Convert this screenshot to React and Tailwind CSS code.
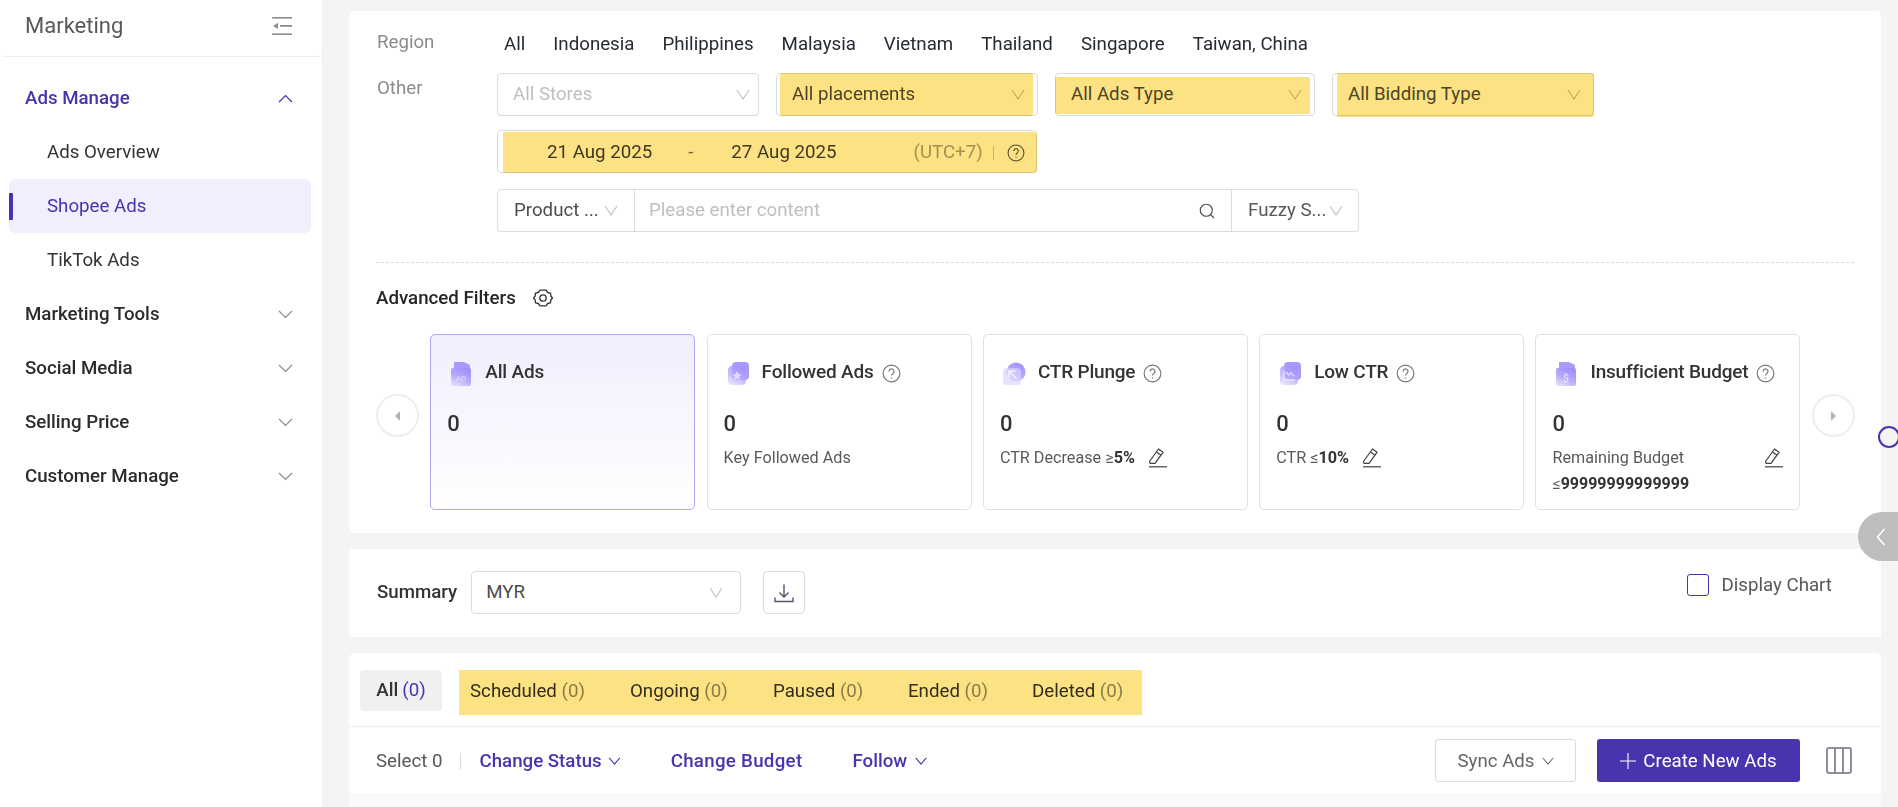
import React from "react";
import { Search } from "lucide-react";

// thin chevron used by every select
const Chevron = ({ up, className = "w-[14px] h-[11px] text-[#bfbfbf]" }) => (
  <svg viewBox="0 0 14 11" fill="none" stroke="currentColor" strokeWidth="1.1" className={className}>
    <polyline points={up ? "1,9 7,2 13,9" : "1,1 7,10 13,1"} />
  </svg>
);

const SmallChevron = ({ className }) => (
  <svg viewBox="0 0 14 9" fill="none" stroke="currentColor" strokeWidth="1.2" className={className}>
    <polyline points="1,1 7,8 13,1" />
  </svg>
);

const Help = ({ className = "w-[19px] h-[19px] text-[#737373]" }) => (
  <svg viewBox="0 0 20 20" fill="none" stroke="currentColor" strokeWidth="1.2" className={className}>
    <circle cx="10" cy="10" r="8.8" />
    <path d="M7.4 7.8a2.6 2.6 0 1 1 4 2.2c-.9.6-1.4 1.1-1.4 2.2" />
    <circle cx="10" cy="14.7" r=".7" fill="currentColor" stroke="none" />
  </svg>
);

const Edit = () => (
  <svg viewBox="0 0 20 20" fill="none" stroke="#404040" strokeWidth="1.2" className="w-[20px] h-[20px]">
    <path d="M1.500 13.500 10.500 1l4.500 3.300-8 11H2z" strokeLinejoin="round" />
    <path d="M8.500 4l4.500 3.300" />
    <path d="M1 18.800h18" />
  </svg>
);

// pastel gradient card icons: a saturated shape behind, a pale blurred one in front
const CardIcon = ({ id, back, children }) => (
  <svg viewBox="0 0 24 26" className="w-[24px] h-[26px] shrink-0">
    <defs>
      <linearGradient id={id} x1="0.7" y1="0" x2="0.2" y2="1">
        <stop offset="0" stopColor="#a08ffb" />
        <stop offset="0.55" stopColor="#b8abfc" />
        <stop offset="1" stopColor="#e4dffe" />
      </linearGradient>
      <filter id={id + "b"} x="-20%" y="-20%" width="140%" height="140%">
        <feGaussianBlur stdDeviation="0.7" />
      </filter>
    </defs>
    <g filter={`url(#${id}b)`} fill={`url(#${id})`}>
      {back === "circle" && (
        <>
          <circle cx="14" cy="11" r="9.500" />
          <rect x="1" y="7" width="18" height="17" rx="4" fill="#d9d3fe" fillOpacity="0.65" />
        </>
      )}
      {back === "folder" && (
        <>
          <path d="M5 1h10l6 3v14H5z" fill="#a99bfb" />
          <rect x="2" y="7" width="20" height="18" rx="2" />
        </>
      )}
      {back === "card" && (
        <>
          <rect x="6" y="1" width="17" height="18" rx="4" fill="#a99bfb" />
          <rect x="2" y="5" width="18" height="19" rx="4" fillOpacity="0.8" />
        </>
      )}
    </g>
    {children}
  </svg>
);

const Select = ({ label, className, muted, overlay }) => (
  <div className={`relative h-[43px] flex items-center justify-between pl-[15px] pr-[8px] bg-white border border-[#dcdcdc] rounded-[4px] ${className}`}>
    <span className={muted ? "text-[#bfbfbf]" : "text-[#4d4d4d]"}>{label}</span>
    <Chevron />
    {overlay && <span className={`absolute bg-[#fde283] mix-blend-multiply rounded-[2px] ${overlay}`} />}
  </div>
);

const Sub = ({ label, active }) => (
  <div className={`relative h-[54px] ml-[9px] mr-[11px] pl-[38px] flex items-center rounded-[6px] ${active ? "bg-[#f1effd] text-[#4a33ae]" : "text-[#333333]"}`}>
    {active && <span className="absolute left-0 top-[14px] w-[4px] h-[27px] bg-[#4a33ae] rounded-r-[1px]" />}
    {label}
  </div>
);

const MenuChevron = ({ open }) => (
  <svg viewBox="0 0 15 9" fill="none" stroke="currentColor" strokeWidth="1.2" className={`w-[15px] h-[9px] ${open ? "text-[#4a33ae]" : "text-[#8c8c8c]"}`}>
    <polyline points={open ? "1,8 7.500,1.500 14,8" : "1,1 7.500,7.500 14,1"} />
  </svg>
);

const Menu = ({ label, open }) => (
  <div className={`h-[54px] pl-[25px] pr-[29px] flex items-center justify-between font-medium ${open ? "text-[#4a33ae]" : "text-[#2b2b2b]"}`}>
    {label}
    <MenuChevron open={open} />
  </div>
);

const FilterCard = ({ title, help, icon, active, children }) => (
  <div className={`w-[265px] h-[176px] shrink-0 border rounded-[5px] pt-[26px] pl-[16px] pr-[15px] ${active ? "border-[#b3a6fa] bg-gradient-to-b from-[#f1eefd] to-white" : "border-[#e1e1e1] bg-white"}`}>
    <div className="h-[25px] flex items-center pl-[2px]">
      {icon}
      <span className="ml-[12px] pb-[2px] font-medium text-[#333333] text-[19px] tracking-[-0.2px]">{title}</span>
      {help && <Help className="ml-[8px] w-[19px] h-[19px] text-[#737373]" />}
    </div>
    <div className="mt-[24px] h-[26px] flex items-center text-[22px] font-medium text-[#333333]">0</div>
    {children}
  </div>
);

const Arrow = ({ right }) => (
  <div className="self-start mt-[60px] w-[43px] h-[43px] shrink-0 rounded-full border-2 border-[#eeeeee] bg-white flex items-center justify-center">
    <span className={`w-0 h-0 border-y-[5px] border-y-transparent ${right ? "border-l-[5px] border-l-[#b5b5b5]" : "border-r-[5px] border-r-[#b5b5b5]"}`} />
  </div>
);

const Tab = ({ label, className }) => (
  <span className={`text-[#333333] ${className}`}>
    {label} <span className="text-[#8c8c8c]">(0)</span>
  </span>
);

const regions = ["All", "Indonesia", "Philippines", "Malaysia", "Vietnam", "Thailand", "Singapore", "Taiwan, China"];

export default function App() {
  return (
    <div className="relative flex h-[807px] w-full overflow-hidden bg-[#f4f4f4] text-[18.7px] font-['Roboto',sans-serif]">
      {/* Sidebar */}
      <aside className="w-[322px] shrink-0 bg-white">
        <div className="h-[57px] pl-[25px] pr-[30px] flex items-center justify-between border-b border-[#eeeeee] rounded-b-[4px]">
          <span className="pb-[5px] text-[22px] text-[#595959]">Marketing</span>
          <svg viewBox="0 0 20 18" className="mb-[5px] w-[20px] h-[18px]" fill="#8c8c8c">
            <rect x="0" y="0" width="20" height="1.6" />
            <rect x="0" y="16.4" width="20" height="1.6" />
            <rect x="8" y="8" width="12" height="1.8" />
            <path d="M1 8.9 6 5.8v6.2z" />
          </svg>
        </div>
        <nav className="pt-[14px]">
          <Menu label="Ads Manage" open />
          <Sub label="Ads Overview" />
          <Sub label="Shopee Ads" active />
          <Sub label="TikTok Ads" />
          <Menu label="Marketing Tools" />
          <Menu label="Social Media" />
          <Menu label="Selling Price" />
          <Menu label="Customer Manage" />
        </nav>
      </aside>

      {/* Main */}
      <main className="flex-1 pl-[27px] pr-[17px] pt-[11px] flex flex-col gap-[16px]">
        {/* Filters */}
        <section className="bg-white rounded-[5px] pt-[19px] pb-[23px]">
          <div className="flex pl-[28px]">
            <div className="w-[120px] shrink-0 text-[#8c8c8c] -mt-[2px]">
              <div className="h-[20px]">Region</div>
              <div className="mt-[26px]">Other</div>
            </div>
            <div>
              <div className="h-[26px] pl-[7px] pt-[3px] flex items-center gap-[28px] text-[#262b33]">
                {regions.map((r) => (
                  <span key={r}>{r}</span>
                ))}
              </div>
              <div className="mt-[17px] flex gap-[17px]">
                <Select label="All Stores" muted className="w-[262px]" />
                <Select label="All placements" className="w-[262px] pr-[12px]" overlay="left-[3px] right-[4px] -top-px -bottom-px" />
                <Select label="All Ads Type" className="w-[260px] pr-[12px]" overlay="-left-px right-[4px] top-[3px] bottom-[1px]" />
                <Select label="All Bidding Type" className="w-[262px] pr-[12px]" overlay="left-[4px] -right-[1px] -top-px -bottom-[2px]" />
              </div>
              <div className="relative mt-[14px] w-[540px] h-[43px] pt-[2px] flex items-center border border-[#dcdcdc] rounded-[4px] text-[#404040]">
                <span className="ml-[49px]">21 Aug 2025</span>
                <span className="ml-[36px] text-[#737373]">-</span>
                <span className="ml-[38px]">27 Aug 2025</span>
                <span className="ml-[77px] text-[#a3a3a3]">(UTC+7)</span>
                <span className="ml-[10px] w-px h-[14px] bg-[#c9c9c9]" />
                <Help className="ml-[13px] w-[18px] h-[18px] text-[#595959]" />
                <span className="absolute left-[5px] -right-px top-[1px] -bottom-px bg-[#fde283] mix-blend-multiply rounded-r-[4px]" />
              </div>
              <div className="mt-[16px] w-[862px] h-[43px] flex items-center border border-[#dcdcdc] rounded-[4px]">
                <div className="w-[137px] h-full pl-[16px] pr-[16px] flex items-center justify-between border-r border-[#dcdcdc] text-[#4d4d4d]">
                  Product ...
                  <Chevron />
                </div>
                <span className="flex-1 pl-[14px] text-[#bfbfbf]">Please enter content</span>
                <Search className="w-[18px] h-[18px] mr-[15px] text-[#4d4d4d]" strokeWidth={1.5} />
                <div className="w-[127px] h-full pl-[16px] pr-[15px] flex items-center justify-between border-l border-[#dcdcdc] text-[#595959]">
                  Fuzzy S...
                  <Chevron />
                </div>
              </div>
            </div>
          </div>

          <div className="mt-[30px] mx-[27px] border-t border-dashed border-[#dcdcdc]" />

          <div className="mt-[23px] ml-[27px] h-[24px] flex items-center font-medium text-[#262626]">
            Advanced Filters
            <svg viewBox="0 0 20 20" fill="none" stroke="#333333" strokeWidth="1.3" className="ml-[17px] w-[20px] h-[20px]">
              <path d="M7 2.2h6l1.7 2.3 2.8.7.4 3L19.500 10l-1.600 1.800-.4 3-2.800.7L13 17.800H7l-1.700-2.300-2.800-.7-.4-3L.5 10l1.600-1.800.4-3 2.800-.7z" strokeLinejoin="round" />
              <circle cx="10" cy="10" r="3.200" />
            </svg>
          </div>

          <div className="mt-[24px] ml-[27px] flex gap-[11.3px]">
            <Arrow />
            <FilterCard
              active
              title="All Ads"
              icon={
                <CardIcon id="ad" back="folder">
                  <text x="12" y="20" textAnchor="middle" fontSize="8" fill="#ffffff" fillOpacity="0.65">AD</text>
                </CardIcon>
              }
            />
            <FilterCard
              help
              title="Followed Ads"
              icon={
                <CardIcon id="fw" back="card">
                  <path d="M11 10l1.400 3 3.200.4-2.300 2.200.6 3.200L11 17.200l-2.900 1.600.6-3.200-2.300-2.200 3.200-.4z" fill="#ffffff" fillOpacity="0.6" />
                </CardIcon>
              }
            >
              <div className="mt-[11px] h-[22px] flex items-center text-[16.2px] text-[#595959]">Key Followed Ads</div>
            </FilterCard>
            <FilterCard
              help
              title="CTR Plunge"
              icon={
                <CardIcon id="ct" back="circle">
                  <path d="M7 16.500V10h6.500M7 10l7.500 7.500" stroke="#ffffff" strokeOpacity="0.8" strokeWidth="1.500" fill="none" />
                </CardIcon>
              }
            >
              <div className="mt-[11px] h-[22px] flex items-center text-[16.2px] text-[#595959]">
                CTR Decrease ≥<b className="font-bold text-[#333333]">5%</b>
                <span className="ml-[13px]"><Edit /></span>
              </div>
            </FilterCard>
            <FilterCard
              help
              title="Low CTR"
              icon={
                <CardIcon id="lc" back="card">
                  <path d="M6 10v9h11M8 11l3 3 2-2 3 3" stroke="#ffffff" strokeOpacity="0.65" strokeWidth="1.300" fill="none" />
                </CardIcon>
              }
            >
              <div className="mt-[11px] h-[22px] flex items-center text-[16.2px] text-[#595959]">
                CTR ≤<b className="font-bold text-[#333333]">10%</b>
                <span className="ml-[13px]"><Edit /></span>
              </div>
            </FilterCard>
            <FilterCard
              help
              title="Insufficient Budget"
              icon={
                <CardIcon id="ib" back="folder">
                  <text x="12" y="21" textAnchor="middle" fontSize="10" fill="#ffffff" fillOpacity="0.75">$</text>
                </CardIcon>
              }
            >
              <div className="mt-[11px] h-[22px] flex items-center justify-between text-[16.2px] text-[#595959]">
                Remaining Budget
                <Edit />
              </div>
              <div className="mt-[4px] h-[22px] flex items-center text-[16px] text-[#595959]">
                ≤<b className="font-bold text-[#333333]">99999999999999</b>
              </div>
            </FilterCard>
            <Arrow right />
          </div>
        </section>

        {/* Summary */}
        <section className="h-[88px] bg-white pl-[28px] pr-[49px] pt-[22px] flex items-start">
          <span className="h-[43px] flex items-center font-medium text-[#333333]">Summary</span>
          <Select label="MYR" className="ml-[14px] w-[270px] pr-[17px] !pl-[14px]" />
          <button className="ml-[22px] w-[42px] h-[43px] border border-[#dcdcdc] rounded-[4px] flex items-center justify-center">
            <svg viewBox="0 0 20 20" fill="none" stroke="#4d5566" strokeWidth="1.400" className="w-[20px] h-[20px]">
              <path d="M10 1.500v12M5.500 9.500l4.500 4.500 4.500-4.500M1 14.500v4h18v-4" />
            </svg>
          </button>
          <label className="ml-auto flex items-center gap-[12px] text-[#595959]">
            <span className="w-[22px] h-[22px] border border-[#4a33ae] rounded-[3px]" />
            Display Chart
          </label>
        </section>

        {/* Table header */}
        <section className="flex-1 bg-[#f9f9f9] rounded-t-[6px]">
          <div className="bg-white rounded-t-[6px]">
            <div className="h-[74px] pl-[11px] pt-[17px] flex items-start border-b border-[#ededed]">
              <span className="w-[82px] h-[41px] flex items-center justify-center gap-[4px] bg-[#f0f0f0] rounded-[4px] font-medium text-[#333333]">
                All <span className="font-normal text-[#4a33ae]">(0)</span>
              </span>
              <div className="relative ml-[17px] w-[683px] h-[45px] pl-[11px] pb-[3px] flex items-center">
                <Tab label="Scheduled" className="w-[160px]" />
                <Tab label="Ongoing" className="w-[143px]" />
                <Tab label="Paused" className="w-[135px]" />
                <Tab label="Ended" className="w-[124px]" />
                <Tab label="Deleted" />
                <span className="absolute inset-0 bg-[#fde283] mix-blend-multiply" />
              </div>
            </div>
            <div className="h-[66px] pl-[27px] pr-[29px] flex items-center text-[#4a33ae]">
              <div className="mt-[3px] flex items-center">
                <span className="text-[#595959]">Select 0</span>
                <span className="ml-[17px] w-px h-[17px] bg-[#dcdcdc]" />
                <span className="ml-[19px] font-medium">Change Status</span>
                <SmallChevron className="ml-[6px] w-[13px] h-[8px]" />
                <span className="ml-[50px] font-medium tracking-[0.3px]">Change Budget</span>
                <span className="ml-[50px] font-medium">Follow</span>
                <SmallChevron className="ml-[7px] w-[14px] h-[8px]" />
              </div>
              <button className="ml-auto w-[141px] h-[43px] pt-[2px] flex items-center justify-center gap-[7px] border border-[#dcdcdc] rounded-[3px] text-[#666666]">
                Sync Ads
                <SmallChevron className="w-[12px] h-[8px] text-[#666666]" />
              </button>
              <button className="ml-[21px] w-[203px] h-[43px] pt-[2px] flex items-center justify-center gap-[7px] bg-[#4a33ae] rounded-[3px] text-white">
                <svg viewBox="0 0 16 16" stroke="currentColor" strokeWidth="1.100" className="w-[16px] h-[16px]">
                  <path d="M8 0v16M0 8h16" />
                </svg>
                Create New Ads
              </button>
              <svg viewBox="0 0 26 27" fill="none" stroke="#8f8f9c" strokeWidth="2" className="ml-[26px] w-[26px] h-[27px]">
                <rect x="1" y="1" width="24" height="25" rx="2" />
                <path d="M9 1v25M17 1v25" />
              </svg>
            </div>
          </div>
        </section>
      </main>

      {/* Floating bits on the right edge */}
      <span className="absolute left-[1878px] top-[426px] w-[22px] h-[22px] rounded-full border-2 border-[#4a33ae]" />
      <div className="absolute right-0 top-[512px] w-[40px] h-[49px] bg-[#bdbdbd] rounded-l-full flex items-center justify-center">
        <svg viewBox="0 0 10 18" fill="none" stroke="#ffffff" strokeWidth="1.600" className="ml-[6px] w-[10px] h-[18px]">
          <path d="M8.500 1 1.500 9l7 8" />
        </svg>
      </div>
    </div>
  );
}
